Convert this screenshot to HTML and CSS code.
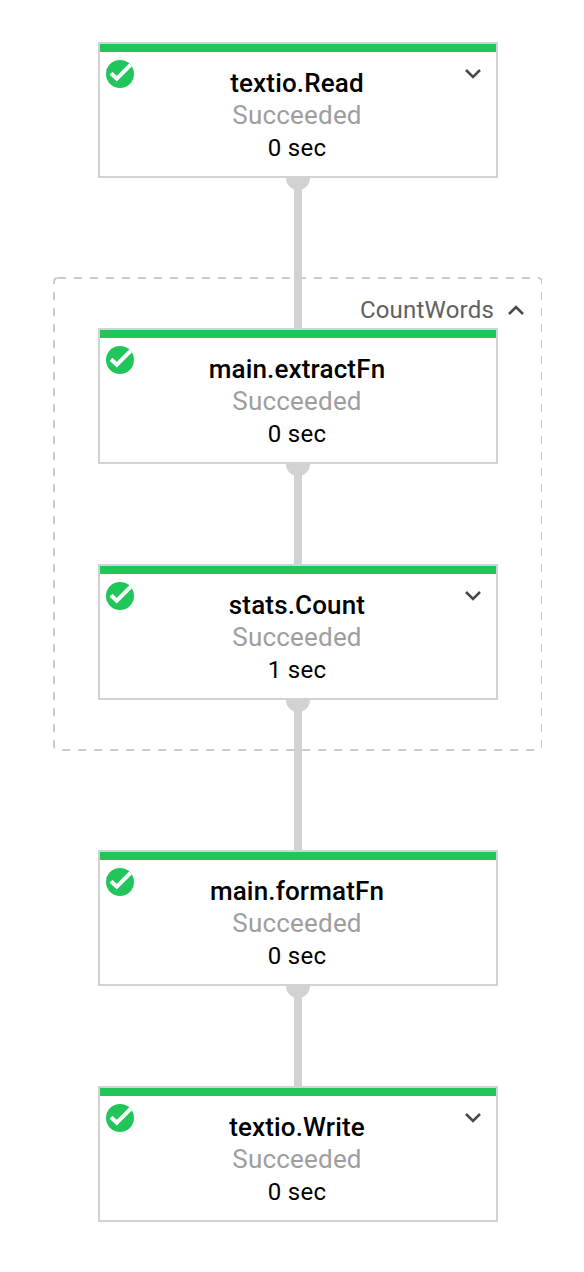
FILE: index.html
```
<!DOCTYPE html>
<html lang="en">
<head>
<meta charset="utf-8">
<title>Pipeline graph</title>
<link rel="stylesheet" href="styles.css">
</head>
<body>
<svg class="defs" width="0" height="0">
  <symbol id="check" viewBox="0 0 28 28">
    <circle cx="14" cy="14" r="14" fill="#20c659"/>
    <path d="M5 13.2 L10.8 18.7 L24.6 4.9" fill="none" stroke="#fff" stroke-width="4.1"/>
  </symbol>
  <symbol id="chevron" viewBox="0 0 18 12">
    <path d="M2 2 L9 9 L16 2" fill="none" stroke="#4a4a4a" stroke-width="2.6"/>
  </symbol>
</svg>
<main class="graph">
  <article class="node">
    <svg class="check"><use href="#check"/></svg>
    <div class="text"><h2 class="name">textio.Read</h2><p class="status">Succeeded</p><p class="time">0 sec</p></div>
    <svg class="chevron"><use href="#chevron"/></svg>
  </article>
  <div class="edge long"></div>
  <section class="group">
    <svg class="outline"><rect x="1" y="1" width="488" height="472" rx="4"/></svg>
    <header class="label"><span>CountWords</span><svg class="chevron up"><use href="#chevron"/></svg></header>
    <article class="node">
      <svg class="check"><use href="#check"/></svg>
      <div class="text"><h2 class="name">main.extractFn</h2><p class="status">Succeeded</p><p class="time">0 sec</p></div>
    </article>
    <div class="edge"></div>
    <article class="node">
      <svg class="check"><use href="#check"/></svg>
      <div class="text"><h2 class="name">stats.Count</h2><p class="status">Succeeded</p><p class="time">1 sec</p></div>
      <svg class="chevron"><use href="#chevron"/></svg>
    </article>
  </section>
  <div class="edge long"></div>
  <article class="node">
    <svg class="check"><use href="#check"/></svg>
    <div class="text"><h2 class="name">main.formatFn</h2><p class="status">Succeeded</p><p class="time">0 sec</p></div>
  </article>
  <div class="edge"></div>
  <article class="node">
    <svg class="check"><use href="#check"/></svg>
    <div class="text"><h2 class="name">textio.Write</h2><p class="status">Succeeded</p><p class="time">0 sec</p></div>
    <svg class="chevron"><use href="#chevron"/></svg>
  </article>
</main>
</body>
</html>
```
FILE: styles.css
```
* { box-sizing: border-box; }
body { margin: 0; background: #fff; font-family: Roboto, sans-serif; }
.defs { position: absolute; }
.graph {
  display: flex;
  flex-direction: column;
  width: 400px;
  height: 1272px;
  margin-left: 98px;
  padding-top: 42px;
}
.node {
  display: grid;
  grid-template-columns: 28px 1fr 28px;
  column-gap: 6px;
  align-items: start;
  height: 136px;
  padding: 8px 6px 0;
  border: 2px solid #d2d2d2;
  background: linear-gradient(#20c659, #20c659) top / 100% 8px no-repeat, #fff;
}
.check { width: 28px; height: 28px; margin-top: 8px; }
.chevron { width: 18px; height: 12px; margin: 16px 0 0 2px; }
.text { padding: 15px 2px 0 0; text-align: center; white-space: nowrap; }
.name, .status, .time { margin: 0; line-height: 32px; }
.name { font-size: 26px; font-weight: 500; letter-spacing: 0.15px; color: #000; }
.status { font-size: 26px; letter-spacing: 0.2px; color: #9e9e9e; }
.time { padding-top: 1px; font-size: 24px; letter-spacing: 0.3px; color: #000; }
.edge {
  position: relative;
  align-self: center;
  width: 24px;
  height: 100px;
  background: linear-gradient(#d2d2d2, #d2d2d2) center / 8px 100% no-repeat;
}
.edge.long { height: 150px; z-index: 1; }
.edge::before {
  content: "";
  display: block;
  height: 12px;
  border-radius: 0 0 12px 12px;
  background: #d2d2d2;
}
.group { position: relative; display: flex; flex-direction: column; }
.group .node { position: relative; }
.outline {
  position: absolute;
  left: -45px;
  top: -51px;
  width: 489px;
  height: 474px;
}
.outline rect { fill: none; stroke: #cacaca; stroke-width: 2; stroke-dasharray: 8; }
.label {
  position: absolute;
  right: -27px;
  top: -33px;
  display: flex;
  align-items: center;
  gap: 13px;
  font-size: 24px;
  line-height: 30px;
  letter-spacing: 0.2px;
  color: #616161;
}
.chevron.up { margin: 0; transform: rotate(180deg); }
```
